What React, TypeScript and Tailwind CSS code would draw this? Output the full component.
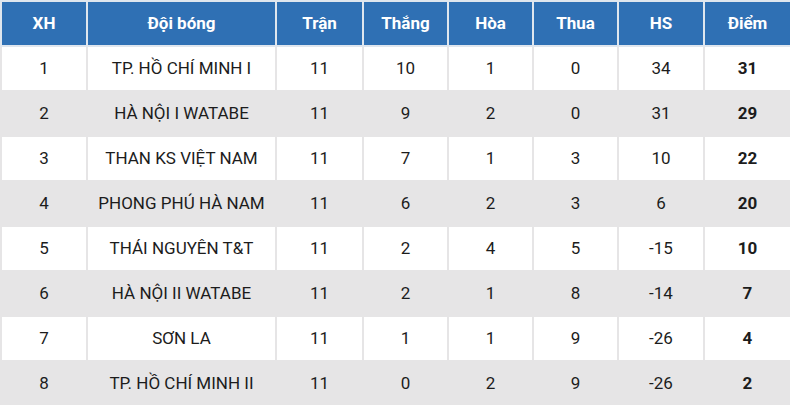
const ROWS = [
    [1, 'TP. HỒ CHÍ MINH I', 11, 10, 1, 0, 34, 31],
    [2, 'HÀ NỘI I WATABE', 11, 9, 2, 0, 31, 29],
    [3, 'THAN KS VIỆT NAM', 11, 7, 1, 3, 10, 22],
    [4, 'PHONG PHÚ HÀ NAM', 11, 6, 2, 3, 6, 20],
    [5, 'THÁI NGUYÊN T&T', 11, 2, 4, 5, -15, 10],
    [6, 'HÀ NỘI II WATABE', 11, 2, 1, 8, -14, 7],
    [7, 'SƠN LA', 11, 1, 1, 9, -26, 4],
    [8, 'TP. HỒ CHÍ MINH II', 11, 0, 2, 9, -26, 2],
]

const HEADERS = ['XH', 'Đội bóng', 'Trận', 'Thắng', 'Hòa', 'Thua', 'HS', 'Điểm']
const WIDTHS = [86, 189, 87, 85, 85, 85, 86, 87]

export default function App() {
    return (
        <div className="w-[790px] h-[405px] overflow-hidden bg-white font-['Roboto',sans-serif]">
            <table className="w-[790px] border-collapse table-fixed">
                <colgroup>
                    {WIDTHS.map((w, i) => (
                        <col key={i} style={{ width: w }} />
                    ))}
                </colgroup>
                <thead>
                    <tr className="h-[45px] bg-[#2f70b4]">
                        {HEADERS.map((h) => (
                            <th
                                key={h}
                                className="border-2 border-[#dfe6ee] text-[17px] font-bold text-white text-center p-0 pt-[1px]"
                            >
                                {h}
                            </th>
                        ))}
                    </tr>
                </thead>
                <tbody>
                    {ROWS.map((r, i) => (
                        <tr key={i} className={`h-[45px] ${i % 2 === 1 ? 'bg-[#e6e5e6]' : 'bg-white'}`}>
                            {r.map((c, j) => (
                                <td
                                    key={j}
                                    className={`border-2 border-[#e6e5e6] text-center text-[17px] text-[#1c1c1c] p-0 ${j === 7 ? 'font-bold' : ''}`}
                                >
                                    {c}
                                </td>
                            ))}
                        </tr>
                    ))}
                </tbody>
            </table>
        </div>
    )
}
